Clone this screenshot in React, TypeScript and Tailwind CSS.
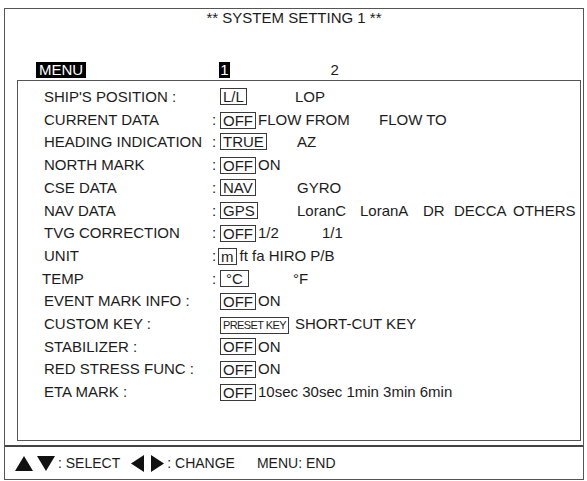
import React from "react"

const font = { fontFamily: '"Liberation Sans", Arial, sans-serif' }

// framed option (currently selected value)
function Box({ children, className = "" }: { children: React.ReactNode; className?: string }) {
  return (
    <span className={`inline-flex h-[17px] items-center border border-[#3a3a3a] px-[2px] leading-[15px] ${className}`}>
      {children}
    </span>
  )
}

function Row({ label, colon = true, labelClass = "", children }: { label: string; colon?: boolean; labelClass?: string; children: React.ReactNode }) {
  return (
    <div className="flex h-[22.7px] items-center whitespace-nowrap">
      <span className={`w-[168px] shrink-0 ${labelClass}`}>{label}</span>
      <span className="w-[8px] shrink-0">{colon ? ":" : ""}</span>
      <div className="flex items-center">{children}</div>
    </div>
  )
}

function TriUp() {
  return (
    <svg width="20" height="17" viewBox="0 0 20 17">
      <polygon points="10,1 19,16 1,16" fill="#111" />
    </svg>
  )
}
function TriDown() {
  return (
    <svg width="20" height="17" viewBox="0 0 20 17">
      <polygon points="1,1 19,1 10,16" fill="#111" />
    </svg>
  )
}
function TriLeft() {
  return (
    <svg width="15" height="19" viewBox="0 0 15 19">
      <polygon points="14,1 14,18 1,9.5" fill="#111" />
    </svg>
  )
}
function TriRight() {
  return (
    <svg width="15" height="19" viewBox="0 0 15 19">
      <polygon points="1,1 1,18 14,9.5" fill="#111" />
    </svg>
  )
}

export default function App() {
  return (
    <div className="h-[481px] w-[587px] bg-white pl-[4px] pt-[8px] text-[15px] text-[#1c1c1c]" style={font}>
      <div className="flex h-[472px] w-[580px] flex-col border border-[#555]">
        {/* title */}
        <div className="h-[18px] text-center leading-[18px]">** SYSTEM SETTING 1 **</div>

        {/* page tabs */}
        <div className="mt-[35px] flex h-[16px] items-center leading-[16px]">
          <span className="ml-[31px] bg-black px-[3px] text-white">MENU</span>
          <span className="ml-[133px] bg-black px-[1px] text-white">1</span>
          <span className="ml-[101px]">2</span>
        </div>

        {/* settings list */}
        <div className="ml-[12px] mt-[2px] h-[361px] w-[564px] border border-[#555] pl-[26px] pt-[5px]">
          <Row label="SHIP'S POSITION :" colon={false}>
            <span className="w-[75px]"><Box>L/L</Box></span>
            <span>LOP</span>
          </Row>
          <Row label="CURRENT DATA">
            <Box>OFF</Box>
            <span className="ml-[2px] w-[121px]">FLOW FROM</span>
            <span>FLOW TO</span>
          </Row>
          <Row label="HEADING INDICATION">
            <span className="w-[77px]"><Box>TRUE</Box></span>
            <span>AZ</span>
          </Row>
          <Row label="NORTH MARK">
            <Box>OFF</Box>
            <span className="ml-[2px]">ON</span>
          </Row>
          <Row label="CSE DATA">
            <span className="w-[77px]"><Box>NAV</Box></span>
            <span>GYRO</span>
          </Row>
          <Row label="NAV DATA">
            <span className="w-[77px]"><Box>GPS</Box></span>
            <span className="w-[63px]">LoranC</span>
            <span className="w-[63px]">LoranA</span>
            <span className="w-[31px]">DR</span>
            <span className="w-[59px]">DECCA</span>
            <span>OTHERS</span>
          </Row>
          <Row label="TVG CORRECTION">
            <Box>OFF</Box>
            <span className="ml-[2px] w-[64px]">1/2</span>
            <span>1/1</span>
          </Row>
          <Row label="UNIT">
            <Box className="-ml-[2px] px-[1px]">m</Box>
            <span className="ml-[3px]">ft fa HIRO P/B</span>
          </Row>
          <Row label="TEMP" labelClass="-ml-[2px] mr-[2px]">
            <span className="w-[73px]"><Box className="px-[5px]">°C</Box></span>
            <span>°F</span>
          </Row>
          <Row label="EVENT MARK INFO :" colon={false}>
            <Box>OFF</Box>
            <span className="ml-[2px]">ON</span>
          </Row>
          <Row label="CUSTOM KEY :" colon={false}>
            <span className="w-[75px]">
              <Box className="text-[11px] tracking-[-0.6px]">PRESET KEY</Box>
            </span>
            <span>SHORT-CUT KEY</span>
          </Row>
          <Row label="STABILIZER :" colon={false}>
            <Box>OFF</Box>
            <span className="ml-[2px]">ON</span>
          </Row>
          <Row label="RED STRESS FUNC :" colon={false}>
            <Box>OFF</Box>
            <span className="ml-[2px]">ON</span>
          </Row>
          <Row label="ETA MARK :" colon={false}>
            <Box>OFF</Box>
            <span className="ml-[2px]">10sec 30sec 1min 3min 6min</span>
          </Row>
        </div>

        {/* key guide */}
        <div className="mt-[4px] h-[2px] bg-[#444]" />
        <div className="flex flex-1 items-center pl-[9px] text-[14px]">
          <TriUp />
          <span className="ml-[2px]"><TriDown /></span>
          <span className="ml-[2px]">: SELECT</span>
          <span className="ml-[10px]"><TriLeft /></span>
          <span className="ml-[5px]"><TriRight /></span>
          <span className="ml-[2px]">: CHANGE</span>
          <span className="ml-[22px]">MENU: END</span>
        </div>
      </div>
    </div>
  )
}
